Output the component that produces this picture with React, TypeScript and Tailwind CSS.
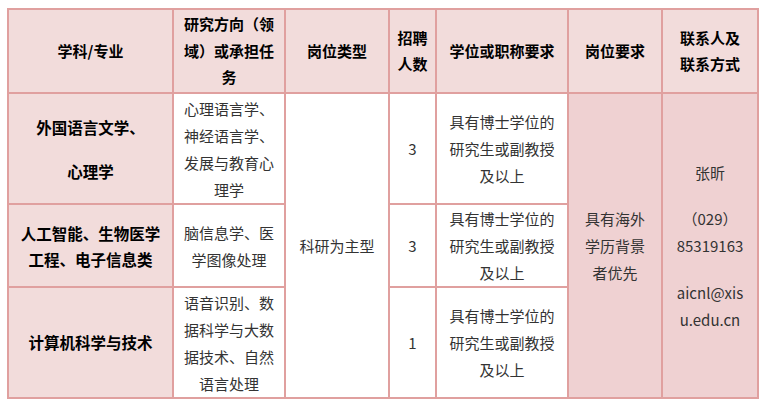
import React from "react"

const border = "border-2 border-[#e0a09f]"
const head = `${border} bg-[#f2dcdb] text-black font-bold text-center align-middle leading-[26.5px] px-1`
const body = `${border} text-[#333333] text-center align-middle leading-[27px] px-1`
const side = `${border} bg-[#f2dcdb] text-black font-bold text-center align-middle px-1 text-[15.5px]`
const pink = `${border} bg-[#efd1d2] text-[#333333] text-center align-middle leading-[27px] px-1`

function Lines({ items }: { items: string[] }) {
  return (
    <>
      {items.map((t, i) => (
        <div key={i}>{t}</div>
      ))}
    </>
  )
}

const degree = ["具有博士学位的", "研究生或副教授", "及以上"]

export default function App() {
  return (
    <div
      className="w-[763px] h-[407px] bg-white pt-[8px] pl-[7px]"
      style={{ fontFamily: '"Noto Sans CJK SC", "Noto Sans", sans-serif' }}
    >
      <table className="table-fixed border-collapse w-[750px] text-[15px]">
        <colgroup>
          <col className="w-[165px]" />
          <col className="w-[112px]" />
          <col className="w-[104px]" />
          <col className="w-[47px]" />
          <col className="w-[132px]" />
          <col className="w-[94px]" />
          <col className="w-[96px]" />
        </colgroup>
        <thead>
          <tr className="h-[84px]">
            <th className={head}>学科/专业</th>
            <th className={head}>
              <Lines items={["研究方向（领", "域）或承担任", "务"]} />
            </th>
            <th className={head}>岗位类型</th>
            <th className={head}>
              <Lines items={["招聘", "人数"]} />
            </th>
            <th className={head}>学位或职称要求</th>
            <th className={head}>岗位要求</th>
            <th className={head}>
              <Lines items={["联系人及", "联系方式"]} />
            </th>
          </tr>
        </thead>
        <tbody>
          <tr className="h-[111px]">
            <td className={`${side} leading-[44px]`}>
              <Lines items={["外国语言文学、", "心理学"]} />
            </td>
            <td className={body}>
              <Lines items={["心理语言学、", "神经语言学、", "发展与教育心", "理学"]} />
            </td>
            <td className={body} rowSpan={3}>
              科研为主型
            </td>
            <td className={body}>3</td>
            <td className={body}>
              <Lines items={degree} />
            </td>
            <td className={pink} rowSpan={3}>
              <Lines items={["具有海外", "学历背景", "者优先"]} />
            </td>
            <td className={pink} rowSpan={3}>
              <div>张昕</div>
              <div className="mt-[19px]">（029）</div>
              <div>85319163</div>
              <div className="mt-[20px]">aicnl@xis</div>
              <div>u.edu.cn</div>
            </td>
          </tr>
          <tr className="h-[82px]">
            <td className={`${side} leading-[26px]`}>
              <Lines items={["人工智能、生物医学", "工程、电子信息类"]} />
            </td>
            <td className={body}>
              <Lines items={["脑信息学、医", "学图像处理"]} />
            </td>
            <td className={body}>3</td>
            <td className={body}>
              <Lines items={degree} />
            </td>
          </tr>
          <tr className="h-[111px]">
            <td className={`${side} leading-[27px]`}>计算机科学与技术</td>
            <td className={body}>
              <Lines items={["语音识别、数", "据科学与大数", "据技术、自然", "语言处理"]} />
            </td>
            <td className={body}>1</td>
            <td className={body}>
              <Lines items={degree} />
            </td>
          </tr>
        </tbody>
      </table>
    </div>
  )
}
